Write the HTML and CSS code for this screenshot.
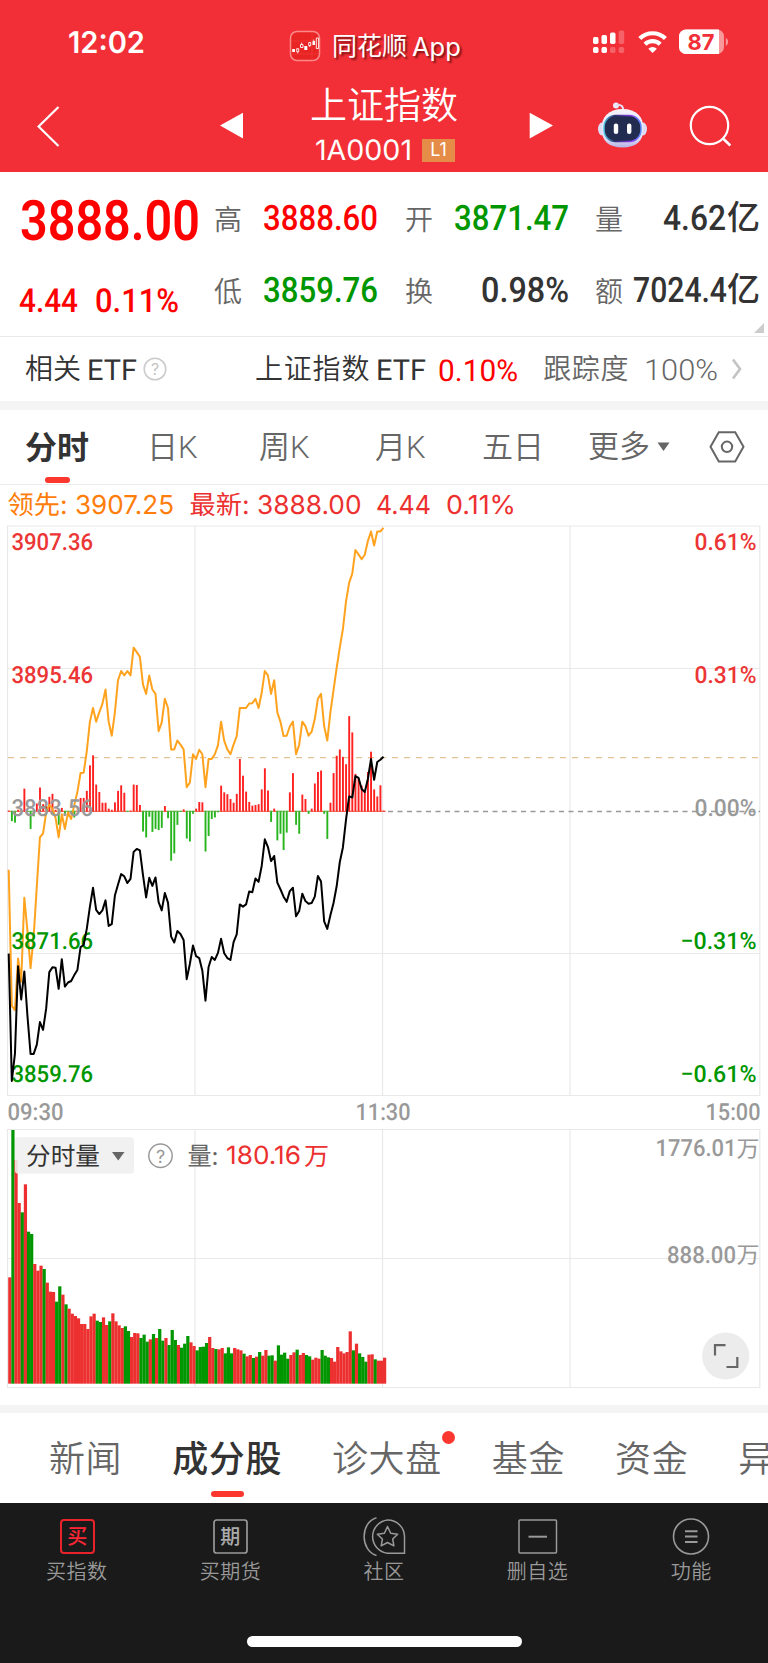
FILE: index.html
```html
<!DOCTYPE html>
<html lang="zh-CN">
<head>
<meta charset="utf-8">
<title>上证指数 1A0001</title>
<link rel="stylesheet" href="styles.css">
</head>
<body>
<header class="header">
  <div class="status">
    <svg class="clock num" width="80" height="30"><text x="0" y="26" textLength="77">12:02</text></svg>
    <div class="app">
      <svg width="32" height="32" viewBox="289 30 32 32">
        <rect x="290.5" y="31.500" width="29" height="29" rx="6.500" fill="#e92424" stroke="#f98a88" stroke-width="1.500"/>
        <path d="M292 41h27M292 54h27M312 33v26" stroke="#f2403c" stroke-width=".6"/>
        <path d="M292.200 49h2.800v3h-2.800zM304.300 46h3v4h-3zM312.500 41h2.500v4h-2.500z" fill="#fff"/>
        <path d="M296.700 48.700h2v3h-2zM300.500 44.500h2.500v3h-2.500zM308.700 42.500h2v3h-2zM316.300 38h2.300v10.500h-2.300z" fill="none" stroke="#fff" stroke-width=".9"/>
        <path d="M297.700 51.700v1.600M301.700 44.500v-2M309.700 45.500v1.500M313.700 41v-1.500" stroke="#fff" stroke-width=".8"/>
      </svg>
      <span class="app-name">同花顺<b>App</b></span>
    </div>
    <svg class="signals" width="178" height="80" viewBox="590 0 178 80">
      <g fill="#fff">
        <rect x="593" y="37" width="5.500" height="7" rx="1.700"/><rect x="601.500" y="35" width="5.500" height="9" rx="1.700"/><rect x="610" y="32.500" width="5.500" height="11.500" rx="1.700"/>
        <rect x="593" y="47" width="5.500" height="6" rx="1.700"/><rect x="601.500" y="47" width="5.500" height="6" rx="1.700"/>
        <g opacity=".25"><rect x="618.700" y="30.500" width="5.500" height="13.500" rx="1.700"/><rect x="610" y="47" width="5.500" height="6" rx="1.700"/><rect x="618.700" y="47" width="5.500" height="6" rx="1.700"/></g>
      </g>
      <g fill="none" stroke="#fff" stroke-width="4.200"><path d="M639.800 38.600a18 18 0 0 1 25.600 0"/><path d="M645 44.200a11 11 0 0 1 15.200 0"/></g>
      <path d="M652.600 53l-4.300-4.300a6.200 6.200 0 0 1 8.600 0z" fill="#fff"/>
      <rect x="679" y="29.500" width="45" height="24.500" rx="7" fill="#f8989b"/>
      <path d="M686 29.500h33V54h-33a7 7 0 0 1-7-7V36.500a7 7 0 0 1 7-7z" fill="#fff"/>
      <path d="M725.800 38c3 .9 3 6.800 0 7.700z" fill="#f8989b"/>
      <text x="687.500" y="50" textLength="27" class="battery">87</text>
    </svg>
  </div>
  <nav class="nav">
    <svg width="200" height="92" viewBox="0 80 200 92"><path d="M58.500 107L38.600 126.500L58.500 146" fill="none" stroke="#fff" stroke-width="2.200"/></svg>
    <svg width="64" height="92" viewBox="200 80 64 92"><path d="M220 125.500L243 112.700V138.500z" fill="#fff"/></svg>
    <div class="title">
      <h1>上证指数</h1>
      <p><svg class="code num" width="97" height="24"><text x="0" y="21" textLength="97">1A0001</text></svg><span class="level">L1</span></p>
    </div>
    <svg width="76" height="92" viewBox="504 80 76 92"><path d="M553 125.500L529.700 112.700V138.500z" fill="#fff"/></svg>
    <svg width="84" height="92" viewBox="580 80 84 92">
      <defs>
        <linearGradient id="shell" x1="0" y1="0" x2="0" y2="1"><stop offset="0" stop-color="#f4f3fb"/><stop offset=".75" stop-color="#e2e0f5"/><stop offset="1" stop-color="#b7b3e6"/></linearGradient>
        <linearGradient id="rim"><stop offset="0" stop-color="#55c7e8"/><stop offset=".3" stop-color="#302f70"/><stop offset=".75" stop-color="#8a3ff0"/><stop offset="1" stop-color="#5b8dff"/></linearGradient>
      </defs>
      <circle cx="616" cy="105.500" r="3" fill="#eceafa"/><path d="M616 105q8-1 7 6" fill="none" stroke="#e2dff6" stroke-width="2"/>
      <ellipse cx="602" cy="129" rx="4" ry="6.500" fill="#dddaf3"/><ellipse cx="643" cy="129" rx="4" ry="6.500" fill="#dddaf3"/>
      <path d="M622.500 109c14 0 21 8 21 19.500 0 13-8 19-21 19s-21-6-21-19c0-11.500 7-19.500 21-19.500z" fill="url(#shell)"/>
      <rect x="604" y="115.500" width="37" height="26" rx="11.500" fill="#222b50" stroke="url(#rim)" stroke-width="1.500"/>
      <rect x="613.800" y="123.500" width="4.400" height="10.500" rx="2.100" fill="#fff"/><rect x="627" y="123.500" width="4.400" height="10.500" rx="2.100" fill="#fff"/>
    </svg>
    <svg width="104" height="92" viewBox="664 80 104 92"><circle cx="709.500" cy="125.500" r="18.700" fill="none" stroke="#fff" stroke-width="2.200"/><path d="M722.500 138L730.300 145.500" stroke="#fff" stroke-width="2.500"/></svg>
  </nav>
</header>

<section class="quote">
  <div class="price">
    <svg class="num last" width="184" height="46"><text x="1" y="43" textLength="180">3888.00</text></svg>
    <svg class="num change" width="184" height="30"><text x="0" y="27" textLength="59">4.44</text><text x="76" y="27" textLength="84">0.11%</text></svg>
  </div>
  <dl class="stats">
    <div class="stat"><dt>高</dt><dd><svg class="num up" width="114" height="30"><text x="0" y="26.500" textLength="115">3888.60</text></svg></dd></div>
    <div class="stat"><dt>开</dt><dd><svg class="num down" width="114" height="30"><text x="0" y="26.500" textLength="115">3871.47</text></svg></dd></div>
    <div class="stat"><dt>量</dt><dd><svg class="num" width="64" height="30"><text x="0" y="26.500" textLength="63">4.62</text></svg><span class="unit">亿</span></dd></div>
    <div class="stat"><dt>低</dt><dd><svg class="num down" width="114" height="30"><text x="0" y="26.500" textLength="115">3859.76</text></svg></dd></div>
    <div class="stat"><dt>换</dt><dd><svg class="num" width="87" height="30"><text x="0" y="26.500" textLength="88">0.98%</text></svg></dd></div>
    <div class="stat"><dt>额</dt><dd><svg class="num" width="94" height="30"><text x="0" y="27" textLength="94">7024.4</text></svg><span class="unit">亿</span></dd></div>
  </dl>
  <i class="fold"></i>
</section>

<section class="etf">
  <span class="etf-label">相关</span>
  <svg class="num latin" width="50" height="24"><text x="0" y="22.500" textLength="50">ETF</text></svg>
  <svg class="help" width="24" height="24"><circle cx="12" cy="12" r="10.800"/><text x="12" y="17.500" text-anchor="middle">?</text></svg>
  <span class="etf-name">上证指数</span>
  <svg class="num latin" width="50" height="24"><text x="0" y="22.500" textLength="50">ETF</text></svg>
  <svg class="num etf-pct" width="80" height="24"><text x="0" y="23.500" textLength="80">0.10%</text></svg>
  <span class="etf-track">跟踪度</span>
  <svg class="num track-pct" width="74" height="24"><text x="0" y="22.500" textLength="74">100%</text></svg>
  <svg class="etf-arrow" width="12" height="22"><path d="M2 1.500L9 11L2 20.500" fill="none" stroke="#c4c4c4" stroke-width="2.700"/></svg>
</section>

<nav class="periods">
  <a class="active">分时</a><a>日K</a><a>周K</a><a>月K</a><a>五日</a>
  <a class="more">更多<svg width="13" height="10"><path d="M.5 .5h12L6.500 9z" fill="#666"/></svg></a>
  <svg class="gear" width="36" height="32"><path d="M9.800 1.200H26.200L34.500 15.800L26.200 30.500H9.800L1.500 15.800z"/><circle cx="18" cy="15.800" r="5.200"/></svg>
</nav>

<section class="chart">
<svg id="chart" width="768" height="920" viewBox="0 485 768 920">
  <g class="legend">
    <g fill="#ff7d0a"><text x="7.500" y="514.300" textLength="60">领先:</text><text x="75" y="514.300" textLength="99">3907.25</text></g>
    <g fill="#ec3030"><text x="189.500" y="514.300" textLength="60">最新:</text><text x="257" y="514.300" textLength="104.500">3888.00</text><text x="376" y="514.300" textLength="55">4.44</text><text x="446" y="514.300" textLength="70">0.11%</text></g>
  </g>
  <path class="grid" d="M7.500 526H759.800V1095.500H7.500zM7.500 668.500H759.800M7.500 953.500H759.800M195 526V1095.500M382.500 526V1095.500M570 526V1095.500M7.500 1129.500H759.800V1387.500H7.500zM7.500 1258.500H759.800M195 1129.500V1387.500M382.500 1129.500V1387.500M570 1129.500V1387.500"/>
  <path d="M8 757.700H760" stroke="#e2c396" stroke-width="1.300" stroke-dasharray="6 6"/>
  <path d="M388 811.500H760" stroke="#999" stroke-width="1.600" stroke-dasharray="5 4.500"/>
  <g id="momentum"></g>
  <polyline id="lead" fill="none" stroke="#ffa31f" stroke-width="2" stroke-linejoin="round"/>
  <g class="axis">
    <g fill="#ec3535"><text x="11.500" y="549.500" textLength="81.500">3907.36</text><text x="11.500" y="682.500" textLength="81.500">3895.46</text><text x="694.500" y="549.500" textLength="62">0.61%</text><text x="694.500" y="682.500" textLength="62">0.31%</text></g>
    <g fill="#999"><text x="11.500" y="815.500" textLength="81.500">3883.56</text><text x="694.500" y="815.500" textLength="62">0.00%</text></g>
    <g fill="#009600"><text x="11.500" y="948.500" textLength="81.500">3871.66</text><text x="11.500" y="1081.500" textLength="81.500">3859.76</text><text x="680.500" y="948.500" textLength="76">−0.31%</text><text x="680.500" y="1081.500" textLength="76">−0.61%</text></g>
  </g>
  <polyline id="index" fill="none" stroke="#000" stroke-width="2" stroke-linejoin="round"/>
  <g class="gray-num">
    <text x="7.500" y="1120.300" textLength="56">09:30</text><text x="355.500" y="1120.300" textLength="55">11:30</text><text x="705.500" y="1120.300" textLength="55">15:00</text>
    <text x="655.500" y="1156.200" textLength="81">1776.01</text><text x="667" y="1262.800" textLength="69">888.00</text>
    <text class="wan" x="736.500" y="1156.500" textLength="23">万</text><text class="wan" x="736.500" y="1263.200" textLength="23">万</text>
  </g>
  <g id="volume"></g>
  <rect x="15" y="1137.300" width="119" height="36.500" rx="3" fill="#efefef" fill-opacity=".88"/>
  <g class="volume-head">
    <text x="26" y="1165" textLength="74" fill="#333">分时量</text>
    <path d="M112 1152H124.500L118.200 1160.500z" fill="#666"/>
    <circle cx="160.500" cy="1155.800" r="11.700" fill="none" stroke="#999" stroke-width="1.500"/>
    <text class="mark" x="160.500" y="1162.500" text-anchor="middle" fill="#999">?</text>
    <text x="187.500" y="1165" textLength="31" fill="#666">量:</text>
    <text x="226" y="1164" textLength="75" fill="#ec3030">180.16</text><text x="304" y="1164.500" fill="#ec3030">万</text>
  </g>
  <circle cx="725.700" cy="1356" r="23.600" fill="#ececec"/>
  <path d="M715 1355.500V1345.200H725.500M737.300 1357V1367H726.500" fill="none" stroke="#666" stroke-width="2.200"/>
</svg>
</section>

<nav class="sections">
  <a>新闻</a><a class="active">成分股</a><a class="dot">诊大盘</a><a>基金</a><a>资金</a><a>异动</a>
</nav>

<footer class="toolbar">
  <div class="tools">
    <a><svg width="50" height="44"><rect x="9" y="4" width="33" height="33" rx="3" fill="none" stroke="#e9232b" stroke-width="2"/><text class="stamp" x="25.500" y="28" text-anchor="middle" fill="#ff2635">买</text></svg>买指数</a>
    <a><svg width="50" height="44"><rect x="9" y="4" width="33" height="33" rx="2.500" fill="none" stroke="#999" stroke-width="1.700"/><text class="stamp" x="25.500" y="28" text-anchor="middle" fill="#aaa">期</text></svg>买期货</a>
    <a><svg width="50" height="44" fill="none" stroke="#999" stroke-width="1.500"><path d="M17.500 1.800C1 6.500 1 34.500 17.500 39.500"/><path d="M28.500 4A16.700 16.700 0 0 0 28.500 37.200H45.500V20.500A16.700 16.700 0 0 0 28.500 4z"/><path d="M28.500 10.500L31.700 17.300L38.700 18.200L33.700 23L34.900 29.800L28.500 26.500L22.200 29.800L23.400 23L18.300 18.200L25.400 17.300z" stroke-linejoin="round"/></svg>社区</a>
    <a><svg width="50" height="44"><rect x="6" y="4" width="37.500" height="33" rx="1" fill="none" stroke="#999" stroke-width="1.500"/><path d="M15.500 20.700H34" stroke="#999" stroke-width="2"/></svg>删自选</a>
    <a><svg width="50" height="44" fill="none" stroke="#999"><circle cx="25" cy="20.500" r="17.500" stroke-width="1.600"/><path d="M19 15.300H31.500M19 20.600H31.500M19 25.900H31.500" stroke-width="2"/></svg>功能</a>
  </div>
  <div class="home"></div>
</footer>
<script src="chart.js"></script>
</body>
</html>
```

FILE: styles.css
```css
* { box-sizing: border-box; margin: 0; padding: 0; }
body { width: 768px; height: 1663px; overflow: hidden; background: #fff; color: #333; font-family: Roboto, "Noto Sans CJK SC", sans-serif; }
svg { display: block; flex: none; }
a { color: inherit; text-decoration: none; }
text { white-space: pre; }
.num { overflow: visible; fill: currentColor; font-family: Roboto, sans-serif; font-weight: 500; }
.num text, .legend text, .axis text, .gray-num text, .volume-head text { text-rendering: geometricPrecision; }

.header { height: 172px; background: #f22f37; color: #fff; }
.status { display: grid; grid-template-columns: 290px 300px 178px; height: 80px; }
.clock { margin: 27px 0 0 68px; font: 600 30px Inter, sans-serif; }
.app { display: flex; gap: 11px; margin: 30px 0 0 -1px; height: 32px; }
.app-name { display: flex; align-items: center; gap: 5px; padding-top: 1px; font-size: 25px; line-height: 33px; text-shadow: 2px 2px 2px rgba(60, 0, 0, .65); }
.app-name b { font: 400 25.5px Inter, sans-serif; }
.battery { fill: #f22f37; font: 700 22px Inter, sans-serif; }
.nav { display: grid; grid-template-columns: 200px 64px 240px 76px 84px 104px; height: 92px; }
.title h1 { height: 50px; text-align: center; font-size: 37px; font-weight: 350; line-height: 47px; font-family: "Noto Sans CJK SC", sans-serif; }
.title p { display: flex; padding: 9px 0 0 51px; }
.code { font: 400 28px Inter, sans-serif; }
.level { width: 33px; height: 23px; margin-left: 10px; background: #e58c48; text-align: center; font: 400 18px/22px Inter, sans-serif; }

.quote { display: flex; position: relative; height: 165px; border-bottom: 1px solid #e9e9e9; }
.price { width: 214px; padding: 25px 0 0 19px; color: #f00; }
.last { font-size: 56px; font-weight: 600; }
.change { margin-top: 42px; font-size: 33px; }
.stats { display: grid; grid-template-columns: 191px 190px 173px; grid-template-rows: 72px 72px; padding-top: 10px; }
.stat { display: flex; justify-content: space-between; align-items: center; height: 72px; }
.stat dt { color: #666; font-size: 28px; font-weight: 350; line-height: 36px; font-family: "Noto Sans CJK SC", sans-serif; }
.stat dd { display: flex; align-items: center; margin-right: 28px; font-size: 35px; }
.stat:nth-child(3n+2) dd { margin-right: 27px; }
.stat:nth-child(3n) dd { margin-right: 0; }
.stat:nth-child(3n) { width: 165px; }
.unit { font-size: 33px; font-weight: 500; line-height: 36px; }
.up { color: #f00; }
.down { color: #009600; }
.fold { position: absolute; right: 4px; bottom: 3px; width: 0; height: 0; border-left: 10px solid transparent; border-bottom: 10px solid #ccc; }

.etf { display: flex; align-items: center; height: 73px; padding: 0 0 0 25px; border-bottom: 9px solid #f4f4f4; font-size: 28px; }
.etf span { padding-top: 2px; font-weight: 350; line-height: 40px; }
.latin { margin-left: 6px; font-size: 29px; font-weight: 400; }
.help { margin-left: 6px; }
.help circle { fill: none; stroke: #ccc; stroke-width: 1.6px; }
.help text { fill: #c4c4c4; font: 16px Inter, sans-serif; }
.etf-name { margin-left: 88px; letter-spacing: .8px; }
.etf-pct { margin-left: 12px; color: #f00; font-size: 30px; font-weight: 400; }
.etf-track { margin-left: 25px; color: #666; letter-spacing: .6px; }
.track-pct { margin-left: 15px; color: #666; font-size: 29px; font-weight: 350; }
.etf-arrow { margin-left: 13px; }

.periods { display: grid; grid-template-columns: 122px 112px 116px 107px 106px 121px 36px; align-items: center; height: 75px; padding-left: 25px; border-bottom: 1px solid #ebebeb; color: #666; font-size: 31px; font-weight: 350; }
.periods a { line-height: 76px; height: 74px; }
.periods .active { position: relative; color: #333; font-weight: 600; font-size: 32px; }
.periods .active::after { content: ""; position: absolute; left: 20px; bottom: 1px; width: 25px; height: 6px; border-radius: 3px; background: #fb3730; }
.more { display: flex; align-items: center; gap: 7px; }
.gear { fill: none; stroke: #666; stroke-width: 2px; }

.chart { height: 928px; border-bottom: 8px solid #f4f4f4; }
.legend text { font: 400 26px Inter, "Noto Sans CJK SC", sans-serif; }
.grid { fill: none; stroke: #e9e9e9; stroke-width: 1.2px; }
.axis text { font: 500 23.5px Roboto, sans-serif; }
.gray-num { fill: #999; }
.gray-num text { font: 500 23.5px Roboto, sans-serif; }
.gray-num .wan { font: 400 23px "Noto Sans CJK SC", sans-serif; }
.volume-head text { font: 400 25px Inter, "Noto Sans CJK SC", sans-serif; }
.volume-head .mark { font-size: 18px; }

.sections { display: flex; height: 90px; padding-left: 49px; overflow: hidden; color: #666; font-size: 36px; font-weight: 350; line-height: 94px; letter-spacing: .6px; white-space: nowrap; }
.sections a { position: relative; flex: none; height: 90px; margin-right: 50px; }
.sections .active { color: #333; font-weight: 500; }
.sections .active::after { content: ""; position: absolute; left: 39px; bottom: 6px; width: 33px; height: 6px; border-radius: 3px; background: #fb3730; }
.dot::after { content: ""; position: absolute; right: -13px; top: 18px; width: 13px; height: 13px; border-radius: 50%; background: #fb3730; }

.toolbar { height: 160px; background: #1a1a1a; }
.tools { display: grid; grid-template-columns: repeat(5, 1fr); height: 133px; padding-top: 13px; }
.tools a { display: flex; flex-direction: column; align-items: center; color: #999; font-size: 20px; font-weight: 350; line-height: 24px; letter-spacing: .5px; }
.stamp { font: 500 20px "Noto Sans CJK SC", sans-serif; }
.home { width: 275px; height: 11px; margin-left: 247px; border-radius: 6px; background: #fff; }
```

FILE: chart.js
```js
// Minute-by-minute series for the morning session, 121 samples each.
const lead = [945,1313,1325,1185,1248,1021,1110,1211,1125,990,858,847,790,770,780,805,858,795,835,790,808,770,735,684,683,625,545,508,545,520,497,458,545,583,520,433,408,420,408,420,345,357,370,445,470,420,458,470,571,547,483,508,620,620,596,607,620,722,710,633,646,621,633,722,646,646,633,609,545,597,620,633,607,584,508,508,508,496,495,483,508,467,408,420,470,433,520,545,584,583,558,545,633,608,545,557,583,572,538,483,470,557,596,520,460,400,345,295,220,170,145,81,93,106,94,57,31,69,31,31,21];
const index = [1172,1516,1442,1206,1296,1220,1340,1443,1443,1418,1357,1378,1320,1222,1209,1210,1267,1187,1261,1250,1246,1230,1216,1155,1148,1105,1045,994,1054,1065,1055,1028,1097,1092,1015,985,957,963,981,970,897,889,893,960,1020,967,989,966,1033,1055,1008,1034,1126,1142,1111,1119,1135,1241,1200,1150,1179,1184,1218,1299,1208,1181,1189,1170,1132,1171,1184,1189,1141,1120,1039,1045,1039,1004,1006,969,978,935,863,884,922,908,980,998,1018,1032,1003,994,1071,1057,1010,1030,1037,1035,1018,962,977,1085,1105,1068,1035,990,925,885,810,747,750,692,697,727,735,700,646,702,654,648,640];
const momentum = [2,-28,-32,5,3,62,-2,-49,-15,22,65,20,15,40,48,5,-38,10,-8,-15,-3,-18,3,37,37,56,125,152,73,53,24,24,8,5,25,56,71,51,-3,1,73,72,18,-56,-72,-16,-57,-49,-52,-46,15,-20,-135,-115,-38,-3,6,-75,-83,-8,8,26,25,-110,-68,-22,-18,-4,70,52,47,34,24,48,142,97,54,26,16,18,20,60,117,57,-30,8,-80,-62,-106,-59,52,104,-38,-62,46,34,-8,8,76,107,111,-8,-76,24,104,151,168,148,128,258,214,102,90,70,55,107,162,60,41,71,1];
const volume = [562,120,210,339,367,283,425,432,522,542,527,537,578,605,606,635,589,614,643,656,671,678,685,702,702,717,679,671,692,696,682,705,694,670,694,706,714,709,723,741,729,730,744,734,755,748,732,744,717,752,744,765,720,750,765,773,761,738,757,768,781,771,770,759,741,774,777,778,774,790,772,790,774,778,781,791,799,795,804,800,786,797,780,797,796,812,766,794,788,806,795,787,779,795,789,795,799,809,803,806,780,797,802,804,815,771,784,790,786,724,781,761,790,801,815,794,793,808,812,812,803];
const falling = new Set([1,4,6,7,11,15,16,18,28,29,32,37,38,42,43,44,46,48,49,51,52,53,55,56,57,60,61,62,63,66,69,70,71,75,78,80,83,84,86,87,88,89,92,95,96,100,101,102,110,112,113,114,117]);
const STEP = 9.37 / 3;
const UNIT = 0.37; // canvas pixels per sample unit in the price pane

// Labels condense their glyphs to the width reserved for them.
document.querySelectorAll('text[textLength]').forEach(t => t.setAttribute('lengthAdjust', 'spacingAndGlyphs'));

const points = ys => ys.map((y, i) => `${(8.7 + i * STEP).toFixed(2)},${(520 + y * UNIT).toFixed(2)}`).join(' ');
document.getElementById('lead').setAttribute('points', points(lead));
document.getElementById('index').setAttribute('points', points(index));

function bar(parent, x, y, width, height, fill) {
  const r = document.createElementNS('http://www.w3.org/2000/svg', 'rect');
  const attrs = { x, y, width, height, fill };
  for (const k in attrs) r.setAttribute(k, attrs[k]);
  parent.appendChild(r);
}
const m = document.getElementById('momentum');
momentum.forEach((v, i) => {
  const h = Math.max(Math.abs(v) * UNIT, 1);
  bar(m, 7.8 + i * STEP, v > 0 ? 811.6 - h : 810.8, 1.9, h, v > 0 ? '#ff2020' : '#26b51c');
  bar(m, 7.8 + i * STEP, 810.8, 3, 1, v > 0 ? '#f04030' : '#5aa83c');
});
const vol = document.getElementById('volume');
volume.forEach((v, i) => bar(vol, 8.2 + i * STEP, 1090 + v / 3, STEP + .1, (881 - v) / 3, falling.has(i) ? '#009600' : '#ec3030'));
```
